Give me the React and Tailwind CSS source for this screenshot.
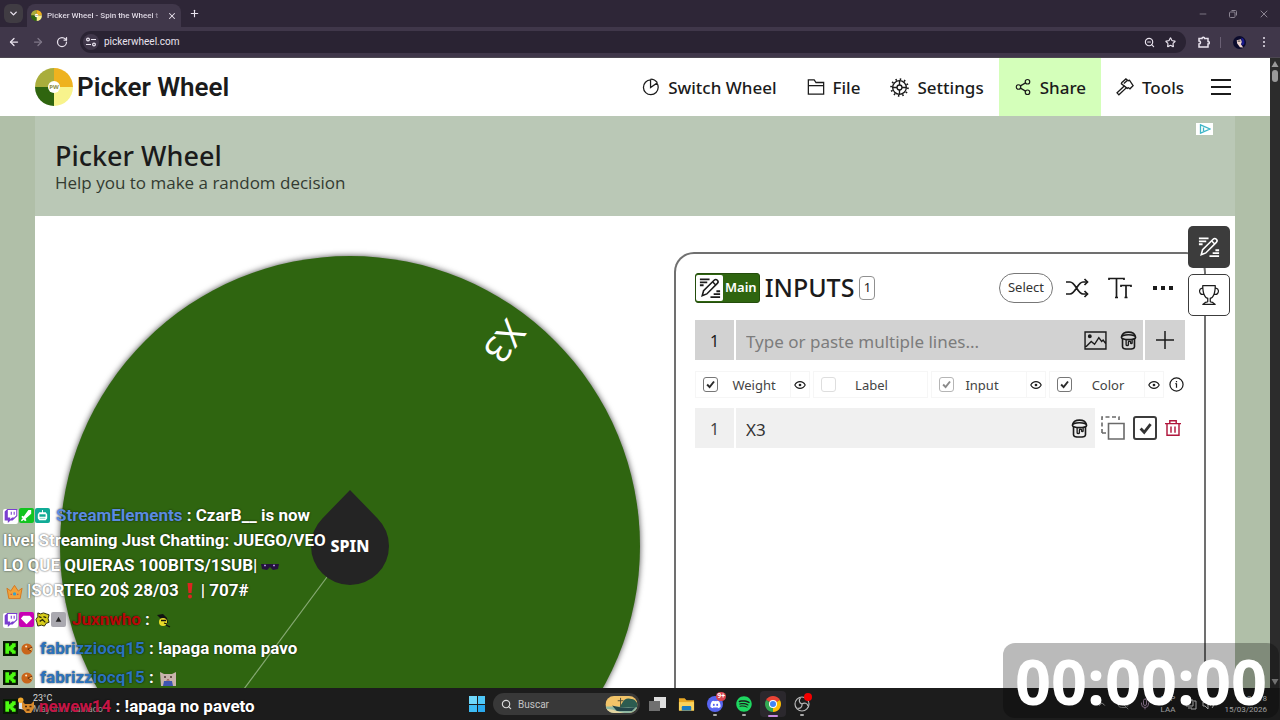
import React, { useState } from 'react';
import { FaTwitch, FaDiscord, FaSpotify } from 'react-icons/fa';
import { BsTrophy } from 'react-icons/bs';
import { ArrowLeft, ArrowRight, RotateCw, ChevronDown, CloudOff, X, Plus, Star, Search, ZoomOut, Share2, Mic, Minus } from 'lucide-react';

/* ---------- icons ---------- */

const Icon = ({ className = 'size-5', box = 20, width = 1.5, children }) => (
  <svg viewBox={`0 0 ${box} ${box}`} className={className} fill="none" stroke="currentColor" strokeWidth={width} aria-hidden="true">
    {children}
  </svg>
);

const PieIcon = () => (
  <Icon className="size-[18px]" width={1.4}>
    <path d="M9.5 2.2A8.2 8.2 0 1 0 18 10.4c0-1.8-.5-3.4-1.5-4.7L9.5 10.5z" />
    <path d="M9.5 1.2c3.2 0 5.7 1.4 7.6 4" />
  </Icon>
);

const FolderIcon = () => (
  <Icon className="size-[18px]" width={1.4}>
    <path d="M1.5 18V2h6.5l2 3h8.5v13z" />
    <path d="M1.5 8.5h17" />
  </Icon>
);

const GearIcon = () => (
  <Icon className="size-[19px]" width={1.4}>
    <circle cx="10" cy="10" r="8.8" strokeWidth="2" strokeDasharray="1.6 3.008" />
    <circle cx="10" cy="10" r="7.2" />
    <circle cx="10" cy="10" r="2.6" />
    <path d="M10 3v4.4M10 12.6V17M3 10h4.4M12.6 10H17" />
  </Icon>
);

const ToolsIcon = () => (
  <Icon className="size-[18px]" width={1.5}>
    <path d="M6.500 5 11 1l2.500 2 1.500-.5 4 6-3.500 3.500-1.700-1.200-1.300.7L6 6.500z" />
    <path d="M9.500 8.500 1.200 16.500l2 2.200 8.500-8" />
    <path d="m12.500 2.800-3.800 3.400" />
  </Icon>
);

const PencilLinesIcon = ({ className }) => (
  <Icon className={className} box={24} width={1.7}>
    <path d="M3.5 20.5 5 15 16.5 3.5c1-1 2.5-1 3.5 0s1 2.5 0 3.5L8.5 18.5z" />
    <path d="m15 5.500 3.500 3.500" />
    <path d="M1 2.500h10.500M1 5.800h8M1 9h4M19 15.500h4M16 18.700h7M12.500 22H23" strokeWidth="2" />
  </Icon>
);

const BucketIcon = () => (
  <Icon className="size-[19px]" width={1.7}>
    <ellipse cx="10" cy="6.5" rx="7.5" ry="2.6" />
    <path d="M3 5.5C3.5 2.7 6 1.2 10 1.2s6.500 1.500 7 4.300" />
    <path d="M3.700 8v8.500c0 1.500 2.600 2.500 6.300 2.500s6.300-1 6.300-2.500V8" />
    <path d="M7.500 9.500v5c0 1.200 2.400 1.200 2.400 0V11.500c0-1 2.300-1 2.300 0v1c0 1 1.600 1 1.600 0V9.500" strokeWidth="1.4" />
  </Icon>
);

const ShuffleIcon = () => (
  <Icon className="size-6" box={24} width={1.7}>
    <path d="M1 6h4c5.5 0 7.5 12 13 12h4.500M1 18h4c5.500 0 7.500-12 13-12h4.500" />
    <path d="m19.5 3 3 3-3 3M19.500 15l3 3-3 3" />
  </Icon>
);

const TextSizeIcon = () => (
  <Icon className="size-6" box={24} width={1.7}>
    <path d="M1 4V2.500h15V4M8.500 2.500v19M7 21.500h3" />
    <path d="M13 11V9.500h10V11M18 9.500v12M16.500 21.500h3" />
  </Icon>
);

const PictureIcon = () => (
  <svg viewBox="0 0 24 20" className="h-[19px] w-[23px]" fill="none" stroke="currentColor" strokeWidth="1.5" aria-hidden="true">
    <path d="M1 1h22v18H1zM2 16.500 7.500 11l3.500 3 4.500-7 3 4 1.500-1.500 3 4" />
    <circle cx="6" cy="5.5" r="1.3" fill="currentColor" />
  </svg>
);

const EyeIcon = () => (
  <Icon className="size-3" box={12} width={1.1}>
    <path d="M.8 6C3 1.500 9 1.500 11.200 6 9 10.500 3 10.500.8 6z" />
    <circle cx="6" cy="6" r=".8" fill="currentColor" />
  </Icon>
);

const CopyIcon = () => (
  <Icon className="size-6" box={24} width={1.6}>
    <path d="M7.500 7.500H23V23H7.500z" />
    <path d="M1 17V1h17v3M1 17h4" strokeDasharray="4 2.5" />
  </Icon>
);

const TrashIcon = () => (
  <Icon className="h-5 w-4" box={20} width={1.8}>
    <path d="M0 4.500h20M6 4V1h8v3M2.500 5v14h15V5M7.500 8v8M12.500 8v8" />
  </Icon>
);

const LogoWheel = ({ className }) => (
  <svg viewBox="0 0 38 38" className={className} aria-hidden="true">
    <path d="M19 19V0A19 19 0 0 0 0 19z" fill="#a9ad3c" />
    <path d="M19 19h19A19 19 0 0 0 19 0z" fill="#eeb21f" />
    <path d="M19 19v19a19 19 0 0 0 19-19z" fill="#f8f38c" />
    <path d="M19 19H0a19 19 0 0 0 19 19z" fill="#2f650f" />
    <circle cx="19" cy="19" r="6" fill="#fff" />
    <text x="19" y="21" textAnchor="middle" fontSize="6" fontWeight="700" fill="#8a8a3c" className="font-['Open_Sans',sans-serif]">PW</text>
  </svg>
);

/* ---------- browser window ---------- */

const BrowserBar = () => (
  <div className="shrink-0 bg-[#2e2637] font-['Open_Sans',sans-serif] text-[#e9e3ee]">
    <div className="flex h-[27px] items-center">
      <button aria-label="Search tabs" className="ml-[4px] grid size-[19px] place-items-center rounded-md bg-[#403c43]">
        <ChevronDown className="size-[11px]" strokeWidth={3} />
      </button>
      <div className="ml-1 flex h-[23px] w-[154px] items-center self-end rounded-t-lg bg-[#40374a] px-1">
        <LogoWheel className="size-[11px] shrink-0" />
        <span className="ml-[5px] flex-1 overflow-hidden whitespace-nowrap bg-linear-to-r from-[#e9e3ee] from-90% to-[#40374a] bg-clip-text font-['Roboto',sans-serif] text-[8px] font-medium text-transparent">Picker Wheel - Spin the Wheel t</span>
        <button aria-label="Close tab" className="ml-1"><X className="size-[10px]" strokeWidth={2.5} /></button>
      </div>
      <button aria-label="New tab" className="ml-2"><Plus className="size-[11px]" strokeWidth={2.5} /></button>
      <div className="ml-auto flex items-center gap-5 pr-[10px] text-[#8b8492]">
        <button aria-label="Minimize"><Minus className="size-[10px]" /></button>
        <button aria-label="Restore">
          <Icon className="size-[10px]" box={10} width={1}>
            <rect x="1.5" y="3" width="5.5" height="5.5" rx="1" />
            <path d="M3.500 1.500h4a1 1 0 0 1 1 1v4" />
          </Icon>
        </button>
        <button aria-label="Close"><X className="size-[12px]" /></button>
      </div>
    </div>
    <div className="flex h-[31px] items-center border-b border-[#4c4751] bg-[#40374a] pl-[8px] pr-[10px]">
      <button aria-label="Back"><ArrowLeft className="size-[12px]" strokeWidth={2.5} /></button>
      <button aria-label="Forward" className="ml-3 text-[#7f7788]"><ArrowRight className="size-[12px]" strokeWidth={2.5} /></button>
      <button aria-label="Reload" className="ml-3"><RotateCw className="size-[12px]" strokeWidth={2.5} /></button>
      <div className="ml-3 flex h-[22px] flex-1 items-center rounded-full bg-[#2a2333] pl-[3px] pr-[10px]">
        <span className="grid size-[16px] place-items-center rounded-full bg-[#40374a]">
          <Icon className="size-[10px]" box={10} width={1.2}>
            <path d="M5 2.500h5M0 7.500h5" />
            <circle cx="2" cy="2.5" r="1.4" />
            <circle cx="8" cy="7.5" r="1.4" />
          </Icon>
        </span>
        <input aria-label="Address" defaultValue="pickerwheel.com" className="ml-[5px] min-w-0 flex-1 bg-transparent font-['Roboto',sans-serif] text-[10px] leading-4 outline-none" />
        <ZoomOut className="size-[11px]" strokeWidth={2.5} />
        <Star className="ml-[10px] size-[11px]" strokeWidth={2.5} />
      </div>
      <Icon className="ml-3 size-[12px]" box={12} width={1.5}>
        <path d="M1 2.500h3a1.300 1.300 0 0 1 2.600 0H10v3a1.300 1.300 0 0 1 0 2.600V11H1V8a1.500 1.500 0 0 0 0-3z" />
      </Icon>
      <span className="ml-[10px] h-[11px] w-px bg-[#6a6074]" />
      <svg viewBox="0 0 14 14" className="ml-3 size-[13px]" aria-hidden="true">
        <circle cx="7" cy="7" r="7" fill="#0b0b2c" />
        <path d="M9 1.500c3 1 4 4 3 7.500l-3 2z" fill="#1a1a8c" />
        <path d="M4 4.500 8.500 3.500l1 3-1 2.500L11 12.500l-3.500-.5-3-4z" fill="#f0d5d0" />
        <path d="M5 5.500h3" stroke="#222" />
      </svg>
      <button aria-label="Menu" className="ml-3 flex w-3 flex-col items-center gap-[2px]">
        <span className="size-[2px] rounded-full bg-current" />
        <span className="size-[2px] rounded-full bg-current" />
        <span className="size-[2px] rounded-full bg-current" />
      </button>
    </div>
  </div>
);

/* ---------- site header ---------- */

const NAV = [
  { label: 'Switch Wheel', icon: <PieIcon /> },
  { label: 'File', icon: <FolderIcon /> },
  { label: 'Settings', icon: <GearIcon /> },
  { label: 'Share', icon: <Share2 className="size-[18px]" strokeWidth={1.6} />, active: true },
  { label: 'Tools', icon: <ToolsIcon /> },
];

const SiteHeader = () => (
  <header className="flex h-[58px] items-stretch bg-white pl-[35px] pr-[29px]">
    <a href="#home" className="flex items-center gap-1">
      <LogoWheel className="size-[38px]" />
      <span className="font-['Roboto',sans-serif] text-[26px] font-semibold leading-8">Picker Wheel</span>
    </a>
    <nav className="ml-auto flex items-stretch text-[17px]">
      {NAV.map((item) => (
        <button
          key={item.label}
          className={`flex items-center gap-2 px-[15px] ${item.active ? 'bg-[#d4ffba]' : ''}`}
        >
          {item.icon}
          <span className="pt-[2px] font-medium">{item.label}</span>
        </button>
      ))}
      <button aria-label="Menu" className="ml-[2px] flex flex-col justify-center gap-[5px] px-[10px]">
        <span className="h-[2px] w-5 bg-[#1b1b1b]" />
        <span className="h-[2px] w-5 bg-[#1b1b1b]" />
        <span className="h-[2px] w-5 bg-[#1b1b1b]" />
      </button>
    </nav>
  </header>
);

/* ---------- wheel ---------- */

const Wheel = () => (
  <div className="relative size-[580px] shrink-0">
    <svg viewBox="0 0 580 580" className="size-full overflow-visible">
      <circle cx="290" cy="290" r="290" fill="#2f6510" className="drop-shadow-[0_0_3px_rgba(0,0,0,0.7)]" />
      <path d="M290 290 118 522" stroke="#86a973" strokeWidth="1.2" />
      <text
        transform="translate(445 86) rotate(127)"
        textAnchor="middle"
        dominantBaseline="central"
        fontSize="36"
        fill="#fff"
        className="font-['Noto_Sans',sans-serif]"
      >
        X3
      </text>
    </svg>
    <button className="absolute left-1/2 top-1/2 grid size-[78px] -translate-x-1/2 -translate-y-1/2 place-items-center text-white">
      <svg viewBox="0 0 78 78" className="col-start-1 row-start-1 size-[78px] overflow-visible" aria-hidden="true">
        <path d="M39-17 66.600 11.400A39 39 0 1 1 11.400 11.400z" fill="#242424" />
      </svg>
      <span className="z-10 col-start-1 row-start-1 text-[16px] font-extrabold">SPIN</span>
    </button>
  </div>
);

/* ---------- inputs panel ---------- */

const CheckBox = ({ id, checked, onChange, disabled, size = 'size-[15px]', border = 'border border-[#8a8a8a]', mark = 'size-[9px] text-[#2b2b2b]', label }) => (
  <span className="grid shrink-0 place-items-center">
    <input
      id={id}
      type="checkbox"
      aria-label={label}
      checked={checked}
      disabled={disabled}
      onChange={onChange}
      className={`col-start-1 row-start-1 appearance-none rounded-[3px] bg-white ${size} ${border}`}
    />
    {checked && (
      <svg viewBox="0 0 12 12" className={`pointer-events-none z-10 col-start-1 row-start-1 ${mark}`} fill="none" stroke="currentColor" strokeWidth="2.6">
        <path d="m1.500 6 3.300 3.500L10.700 2" />
      </svg>
    )}
  </span>
);

const COLUMNS = [
  { id: 'weight', label: 'Weight', on: true, eye: true, border: 'border border-[#777]' },
  { id: 'label', label: 'Label', on: false, eye: false, border: 'border border-[#dedede]', pad: 'pr-5' },
  { id: 'input', label: 'Input', on: true, eye: true, locked: true, border: 'border border-[#b5b5b5]', mark: 'size-[9px] text-[#8a8a8a]', pad: 'pr-4' },
  { id: 'color', label: 'Color', on: true, eye: true, border: 'border border-[#777]' },
];

const InputsPanel = () => {
  const [columns, setColumns] = useState(COLUMNS);
  const [enabled, setEnabled] = useState(true);

  const toggle = (id) => setColumns(columns.map((c) => (c.id === id ? { ...c, on: !c.on } : c)));

  return (
    <section className="relative min-w-0 flex-1 self-stretch rounded-t-[20px] border-2 border-b-0 border-[#707070] px-[19px] pt-[18px]">
      <div className="flex h-8 items-center">
        <div className="flex h-[30px] items-center rounded-[3px] border border-[#244d0c] bg-[#2f6510] pr-[2px]">
          <span className="grid h-[26px] w-[27px] place-items-center rounded-[2px] bg-white">
            <PencilLinesIcon className="size-[22px]" />
          </span>
          <span className="pl-[2px] text-[13px] font-semibold text-white">Main</span>
        </div>
        <h2 className="ml-[5px] text-[25px] font-medium">INPUTS</h2>
        <span className="ml-[5px] grid h-6 w-4 place-items-center rounded-[4px] border border-[#909090] text-[13px]">1</span>
        <button className="ml-auto h-[30px] rounded-full border border-[#777] px-2 text-[13px] text-[#333]">Select</button>
        <button aria-label="Shuffle" className="ml-3"><ShuffleIcon /></button>
        <button aria-label="Text size" className="ml-[19px]"><TextSizeIcon /></button>
        <button aria-label="More" className="ml-[21px] mr-3 flex gap-1">
          <span className="size-[4px] bg-[#1b1b1b]" />
          <span className="size-[4px] bg-[#1b1b1b]" />
          <span className="size-[4px] bg-[#1b1b1b]" />
        </button>
      </div>

      <div className="mt-4 flex h-10 gap-[2px]">
        <span className="grid w-[39px] place-items-center bg-[#d2d2d2] pt-[2px] text-[16px]">1</span>
        <div className="flex min-w-0 flex-1 items-center bg-[#d2d2d2] pr-[5px]">
          <input
            type="text"
            aria-label="New input"
            placeholder="Type or paste multiple lines..."
            className="h-full min-w-0 flex-1 bg-transparent px-[10px] pt-[2px] text-[17px] outline-none placeholder:text-[#7c7c7c]"
          />
          <button aria-label="Add image" className="mr-3"><PictureIcon /></button>
          <button aria-label="Pick color"><BucketIcon /></button>
        </div>
        <button aria-label="Add input" className="grid w-10 place-items-center bg-[#d2d2d2]">
          <Icon className="size-5"><path d="M1 10h18M10 1v18" /></Icon>
        </button>
      </div>

      <div className="mt-[11px] grid h-[27px] grid-cols-[1fr_1fr_1fr_1fr_18px] gap-[3px]">
        {columns.map((col) => (
          <div key={col.id} className="flex items-center border border-[#f6f6f6] pl-[7px]">
            <CheckBox id={col.id} checked={col.on} disabled={col.locked} onChange={() => toggle(col.id)} border={col.border} mark={col.mark} />
            <label htmlFor={col.id} className={`flex-1 pt-[2px] text-center text-[13px] text-[#444] ${col.pad || ''}`}>{col.label}</label>
            {col.eye && (
              <button aria-label={`Show ${col.label}`} className="grid h-full w-[19px] place-items-center border-l border-[#f6f6f6]"><EyeIcon /></button>
            )}
          </div>
        ))}
        <button aria-label="Info" className="grid place-items-center">
          <Icon className="size-[15px]" box={16} width={1.3}>
            <circle cx="8" cy="8" r="7" />
            <path d="M8 7v4.500M8 4.200v1.500M6.800 7H8" />
          </Icon>
        </button>
      </div>

      <div className="mt-[10px] flex h-10 gap-[2px]">
        <span className="grid w-[39px] place-items-center bg-[#f0f0f0] pt-[2px] text-[16px] text-[#444]">1</span>
        <div className="flex min-w-0 flex-1 items-center bg-[#f0f0f0] pr-[6px]">
          <input type="text" aria-label="Input 1" defaultValue="X3" className="h-full min-w-0 flex-1 bg-transparent px-[10px] pt-[2px] text-[17px] text-[#333] outline-none" />
          <button aria-label="Pick color"><BucketIcon /></button>
        </div>
        <div className="flex items-center gap-2 pl-1 pr-1">
          <button aria-label="Duplicate" className="text-[#6a6a6a]"><CopyIcon /></button>
          <CheckBox
            label="Enable input 1"
            checked={enabled}
            onChange={() => setEnabled(!enabled)}
            size="size-6"
            border="border-2 border-[#3c3c3c]"
            mark="size-[13px] text-[#333]"
          />
          <button aria-label="Delete" className="text-[#b0163c]"><TrashIcon /></button>
        </div>
      </div>

      {/* view switcher pinned over the panel's corner */}
      <div className="absolute -right-[26px] -top-7 flex flex-col gap-[6px]">
        <button aria-label="Inputs" className="grid size-[42px] place-items-center rounded-[5px] bg-[#3c3c3c] text-white">
          <PencilLinesIcon className="size-[22px]" />
        </button>
        <button aria-label="Results" className="grid size-[42px] place-items-center rounded-[5px] border border-[#3c3c3c] bg-white">
          <BsTrophy className="size-5" />
        </button>
      </div>
    </section>
  );
};

/* ---------- taskbar ---------- */

const Taskbar = () => (
  <footer className="flex h-8 shrink-0 items-center bg-[#1c1c1c] font-['Roboto',sans-serif] text-[9px] text-[#d8d8d8]">
    <div className="flex flex-1 items-center gap-[3px] pl-[17px]">
      <svg viewBox="0 0 14 16" className="h-4 w-[13px]" aria-hidden="true">
        <path d="M2 2v11l11 2c0-4-3-6-6-6C7 5 5 2 2 2z" fill="#d8e4f0" />
        <circle cx="4" cy="4" r="3" fill="#f3a92c" />
      </svg>
      <div className="leading-[11px]">
        <p>23°C</p>
        <p className="text-[#a8a8a8]">Mayorm. nublado</p>
      </div>
    </div>
    <div className="mr-[5px] flex items-center">
      <button aria-label="Start" className="grid size-4 grid-cols-2 gap-px">
        <span className="bg-[#6fd8fb]" />
        <span className="bg-[#4fc8f8]" />
        <span className="bg-[#3fbdf5]" />
        <span className="bg-[#2aa9ee]" />
      </button>
      <label className="ml-2 flex h-[22px] w-[147px] items-center rounded-full bg-[#383838] pl-2">
        <Search className="size-[11px]" strokeWidth={2.5} />
        <input type="text" placeholder="Buscar" aria-label="Buscar" className="ml-[6px] min-w-0 flex-1 bg-transparent text-[10px] outline-none placeholder:text-[#c4c4c4]" />
        <svg viewBox="0 0 34 18" className="mr-[2px] h-[17px] w-[33px]" aria-hidden="true">
          <clipPath id="scene"><rect width="34" height="18" rx="9" /></clipPath>
          <g clipPath="url(#scene)">
            <path d="M0 0h34v18H0z" fill="#f2c469" />
            <path d="M0 11h34v7H0z" fill="#8fb7a1" />
            <path d="M18 7c2-4 5-5 8-4 5 0 7 3 8 6v3H15z" fill="#2c5c50" />
            <path d="M7 10c8 2 15 3 25 2l-4 4H12z" fill="#24464a" />
            <path d="M16 2v9M13 5h6" stroke="#4c4a32" />
            <path d="M0 14c8-1 12 3 20 4H0z" fill="#e3d4a0" />
          </g>
        </svg>
      </label>
      <button aria-label="Task view" className="ml-2">
        <svg viewBox="0 0 18 16" className="h-4 w-[18px]">
          <path d="M6 1h12v11H6z" fill="#dedede" />
          <path d="M1 5h11v10H1z" fill="#707070" />
        </svg>
      </button>
      <button aria-label="Explorer" className="ml-3">
        <svg viewBox="0 0 18 16" className="h-4 w-[17px]">
          <path d="M1 2h6l2 2h8v11H1z" fill="#e9a825" />
          <path d="M1 6h16v9H1z" fill="#fbd35c" />
          <path d="M4 15v-3.500c0-1 .5-1.500 1.500-1.500h7c1 0 1.500.5 1.500 1.500V15z" fill="#1a7dc4" />
        </svg>
      </button>
      <button aria-label="Discord" className="relative ml-3 grid size-4 place-items-center rounded-full bg-[#5865f2] text-white">
        <FaDiscord className="size-[11px]" />
        <span className="absolute -right-[3px] -top-[4px] rounded-full bg-[#d8454f] px-px text-[7px] font-bold leading-[9px]">9+</span>
        <span className="absolute -bottom-[4px] left-[6px] h-[2px] w-1 rounded bg-[#aaa]" />
      </button>
      <button aria-label="Spotify" className="relative ml-[13px]">
        <FaSpotify className="size-4 text-[#1ed760]" />
        <span className="absolute -bottom-[4px] left-[6px] h-[2px] w-1 rounded bg-[#aaa]" />
      </button>
      <button aria-label="Chrome" className="relative ml-2 grid size-[26px] place-items-center rounded-[4px] bg-[#2b282d]">
        <svg viewBox="0 0 20 20" className="size-4">
          <path d="M10 10 1.340 5A10 10 0 0 1 18.660 5z" fill="#ea4335" />
          <path d="M10 10 18.660 5A10 10 0 0 1 10 20z" fill="#fbbc05" />
          <path d="M10 10v10A10 10 0 0 1 1.340 5z" fill="#34a853" />
          <circle cx="10" cy="10" r="5" fill="#fff" />
          <circle cx="10" cy="10" r="3.8" fill="#4285f4" />
        </svg>
        <span className="absolute bottom-0 left-2 h-[2px] w-[10px] rounded bg-[#c78be0]" />
      </button>
      <button aria-label="OBS" className="relative ml-2">
        <svg viewBox="0 0 16 16" className="size-4" fill="none" stroke="#b9b9b9" strokeWidth="1.2">
          <circle cx="8" cy="8" r="7" />
          <path d="M8 8C5 7 4.500 4 6.500 2M8 8c2.500-2 5.500-.5 6 2M8 8c.5 3-2 5-4.500 4" />
        </svg>
        <span className="absolute -right-[2px] -top-[3px] size-2 rounded-full bg-[#f40000]" />
        <span className="absolute -bottom-[4px] left-[6px] h-[2px] w-1 rounded bg-[#aaa]" />
      </button>
    </div>
    <div className="flex flex-1 items-center justify-end gap-[10px] pr-[13px] text-[8px]">
      <ChevronDown className="size-[10px] rotate-180" />
      <CloudOff className="size-3 text-[#8a8a8a]" />
      <Mic className="size-3 text-[#a58aa8]" />
      <div className="text-center leading-[11px]"><p>ESP</p><p>LAA</p></div>
      <div className="flex gap-[5px]">
        <Icon className="size-3" box={12} width={1}><path d="M1 2h7v6H1zM3 10h4M9 3h2v8H6" /></Icon>
        <Icon className="size-3" box={12} width={1}><path d="M1 4h2l3-3v10L3 8H1zM8 4c1 1 1 3 0 4M10 2c2 2 2 6 0 8" /></Icon>
      </div>
      <div className="text-right leading-[11px]"><p>20:18</p><p>15/03/2026</p></div>
    </div>
  </footer>
);

/* ---------- stream overlays ---------- */

const TwitchBadge = () => (
  <span className="inline-grid size-[15px] place-items-center rounded-[2px] bg-white align-[-2px] text-[#7a3fd0]"><FaTwitch className="size-[14px]" /></span>
);

const Badge = ({ className = '', children }) => (
  <svg viewBox="0 0 16 16" className={`ml-[1px] inline-block size-[15px] rounded-[2px] align-[-2px] ${className}`} aria-hidden="true">
    {children}
  </svg>
);

const KickBadges = ({ cat }) => (
  <>
    <svg viewBox="0 0 16 16" className="inline-block size-[15px] align-[-2px]" aria-hidden="true">
      <path d="M0 0h16v16H0z" fill="#071a02" />
      <path d="M2.500 2.500h4v3H8V4h1.500V2.500h4v4H12V8h-1.500v1H12v1h1.500v3.500h-4V12H8v-1.500H6.500v3h-4z" fill="#4dfb12" />
    </svg>
    {cat ? (
      <svg viewBox="0 0 14 14" className="ml-[3px] mr-1 inline-block size-[14px] align-[-2px]" aria-hidden="true">
        <path d="M1 1l3 3h6l3-3v7l-3 5H5L1 8z" fill="#d98a2c" />
        <path d="M4 6.500h2M8.500 6.500h2M5.500 10h3" stroke="#47240c" strokeWidth="1.5" />
      </svg>
    ) : (
      <svg viewBox="0 0 14 14" className="ml-[3px] mr-[7px] inline-block size-[12px] align-[-1px]" aria-hidden="true">
        <circle cx="7" cy="7" r="6.5" fill="#c9651a" />
        <path d="M13 5 8 7l4 2.500" fill="#f7bf60" stroke="#5b250b" />
        <circle cx="6" cy="4" r="1.2" fill="#fbe9c8" />
      </svg>
    )}
  </>
);

const ChatOverlay = () => (
  <aside className="pointer-events-none absolute bottom-[1px] left-[3px] flex flex-col gap-1 whitespace-nowrap font-['Roboto',sans-serif] text-[17px] font-bold leading-[25px] text-white [text-shadow:0_0_2px_rgba(0,0,0,0.8)]">
    <div>
      <TwitchBadge />
      <Badge className="bg-[#12c41f]"><path d="M13 2v4L7 11.500 8 13l-1.500 1L5 12.500 3 14l-1-1 2-2L2.500 9.500l1-1.300L5 9l5-7z" fill="#fff" /></Badge>
      <Badge className="mr-[6px] bg-[#10ab96]">
        <path d="M7.500 2h1v2.500h3L13 7v4l-1.500 2h-7L3 11V7l1.500-2.500h3z" fill="#fff" />
        <path d="M5 7h6v2H5zM5 11h6" fill="#10ab96" stroke="#10ab96" strokeWidth=".5" />
      </Badge>
      <span className="text-[#5b8be0]">StreamElements</span> : CzarB__ is now
      <br />live! Streaming Just Chatting: JUEGO/VEO
      <br />LO QUE QUIERAS 100BITS/1SUB|
      <svg viewBox="0 0 18 10" className="ml-1 inline-block h-[10px] w-[18px]" aria-hidden="true">
        <path d="M0 2h18l-1 5-5 1-3-3-3 3-5-1z" fill="#24123c" />
        <path d="M3 3.500h2M12 3.500h2" stroke="#a788d8" strokeWidth="1.5" />
      </svg>
      <br />
      <svg viewBox="0 0 18 16" className="ml-[3px] mr-1 inline-block h-4 w-[17px] align-[-4px]" aria-hidden="true">
        <path d="M1 4l4 3 4-6 4 6 4-3-2 11H3z" fill="#f2a23a" stroke="#d4751d" />
        <circle cx="9" cy="10" r="1.8" fill="#39a0c9" />
        <path d="M5 10.500h1M12 10.500h1" stroke="#c02f4d" strokeWidth="1.5" />
      </svg>
      |SORTEO 20$ 28/03
      <svg viewBox="0 0 8 16" className="mx-[7px] inline-block h-4 w-[8px] align-[-3px]" aria-hidden="true">
        <path d="M1.500 0h5l-1 10h-3z" fill="#dd2420" />
        <circle cx="4" cy="13.5" r="2" fill="#dd2420" />
      </svg>
      | 707#
    </div>
    <div>
      <TwitchBadge />
      <Badge className="bg-[#c800b4]"><path d="M4.500 4h7L14 7l-6 6-6-6z" fill="#fff" /></Badge>
      <Badge>
        <path d="m3 1 3 1 3-1 3 1 3 1-1 4 1 4-3 1-2 3-3-1-4 1-1-4-1-3 2-3z" fill="#d8cd1c" stroke="#2a2a08" />
        <path d="m4 5 3 1M9 5l3 1M5 10l3-2 3 3" stroke="#2a2a08" fill="none" strokeWidth="1.3" />
      </Badge>
      <Badge className="mr-[6px] bg-[#aaa9b0]"><path d="m8 5 3 5.500H5z" fill="#222" /></Badge>
      <span className="text-[#b80808]">Juxnwho</span> :
      <svg viewBox="0 0 16 14" className="ml-[6px] inline-block h-[14px] w-4 align-[-3px]" aria-hidden="true">
        <path d="M1 1 7 0l4 4 1 5-4-1z" fill="#111" />
        <circle cx="7" cy="8" r="4" fill="#e8dc28" />
        <path d="M5 6.500h5M8 9l3 1M10 11l4 2" stroke="#111" strokeWidth="1.3" />
      </svg>
    </div>
    <div><KickBadges /><span className="text-[#2b72bd]">fabrizziocq15</span> : !apaga noma pavo</div>
    <div>
      <KickBadges /><span className="text-[#2b72bd]">fabrizziocq15</span> :
      <svg viewBox="0 0 16 14" className="ml-[6px] inline-block h-[14px] w-4 align-[-3px]" aria-hidden="true">
        <path d="M0 0l4 2h8l4-2v14H1z" fill="#c9b4ac" />
        <path d="M4 5h2M10 5h2" stroke="#4a3630" strokeWidth="1.5" />
        <path d="M4 9h8l1 5H3z" fill="#3e55b0" />
        <path d="M6 8.500 8 7l2 1.500z" fill="#8b4a4a" />
      </svg>
    </div>
    <div><KickBadges cat /><span className="text-[#c51545]">newew14</span> : !apaga no paveto</div>
  </aside>
);

const TimerOverlay = () => (
  <div className="pointer-events-none absolute bottom-[2px] right-[1px] rounded-[12px] bg-black/27 px-[12px] font-['Open_Sans',sans-serif] text-[63px] font-bold leading-[75px] text-white">
    00:00:00
  </div>
);

export default function App() {
  return (
    <div className="relative flex h-screen flex-col overflow-hidden font-['Noto_Sans',sans-serif] text-[#1b1b1b]">
      <BrowserBar />
      <div className="flex min-h-0 flex-1">
        <div className="flex min-w-0 flex-1 flex-col overflow-hidden bg-[#b0bfa8]">
          <SiteHeader />
          <main className="mx-auto flex min-h-0 w-full max-w-[1200px] flex-1 flex-col">
            <div className="relative h-[100px] shrink-0 bg-[#bac8b6] px-5 pt-[22px]">
              <h1 className="text-[27px] font-medium leading-9">Picker Wheel</h1>
              <p className="font-['Open_Sans',sans-serif] text-[17px] leading-[18px] text-[#333b31]">Help you to make a random decision</p>
              <a href="#ads" aria-label="AdChoices" className="absolute right-[22px] top-[7px] grid h-3 w-[17px] place-items-center bg-white">
                <svg viewBox="0 0 12 10" className="h-[10px] w-3" fill="none" stroke="#3fb6c8" strokeWidth="1.3">
                  <path d="M1.500.8v8.400L11 5zM4.500 3.500v3.500" />
                </svg>
              </a>
            </div>
            <div className="flex min-h-0 flex-1 items-start gap-[34px] overflow-hidden bg-white pl-[25px] pr-[29px] pt-9">
              <div className="mt-1 shrink-0"><Wheel /></div>
              <InputsPanel />
            </div>
          </main>
        </div>
        <div className="flex w-[10px] flex-col items-center bg-[#2c2c2c] py-[3px] text-[#9a9a9a]" aria-hidden="true">
          <svg viewBox="0 0 8 6" className="h-[6px] w-2 shrink-0" fill="currentColor"><path d="M4 0l3.500 6h-7z" /></svg>
          <span className="mt-[3px] h-3 w-[6px] rounded-full bg-[#9a9a9a]" />
          <svg viewBox="0 0 8 6" className="mt-auto h-[6px] w-2 shrink-0" fill="currentColor"><path d="M4 6 .5 0h7z" /></svg>
        </div>
      </div>
      <Taskbar />
      <ChatOverlay />
      <TimerOverlay />
    </div>
  );
}
